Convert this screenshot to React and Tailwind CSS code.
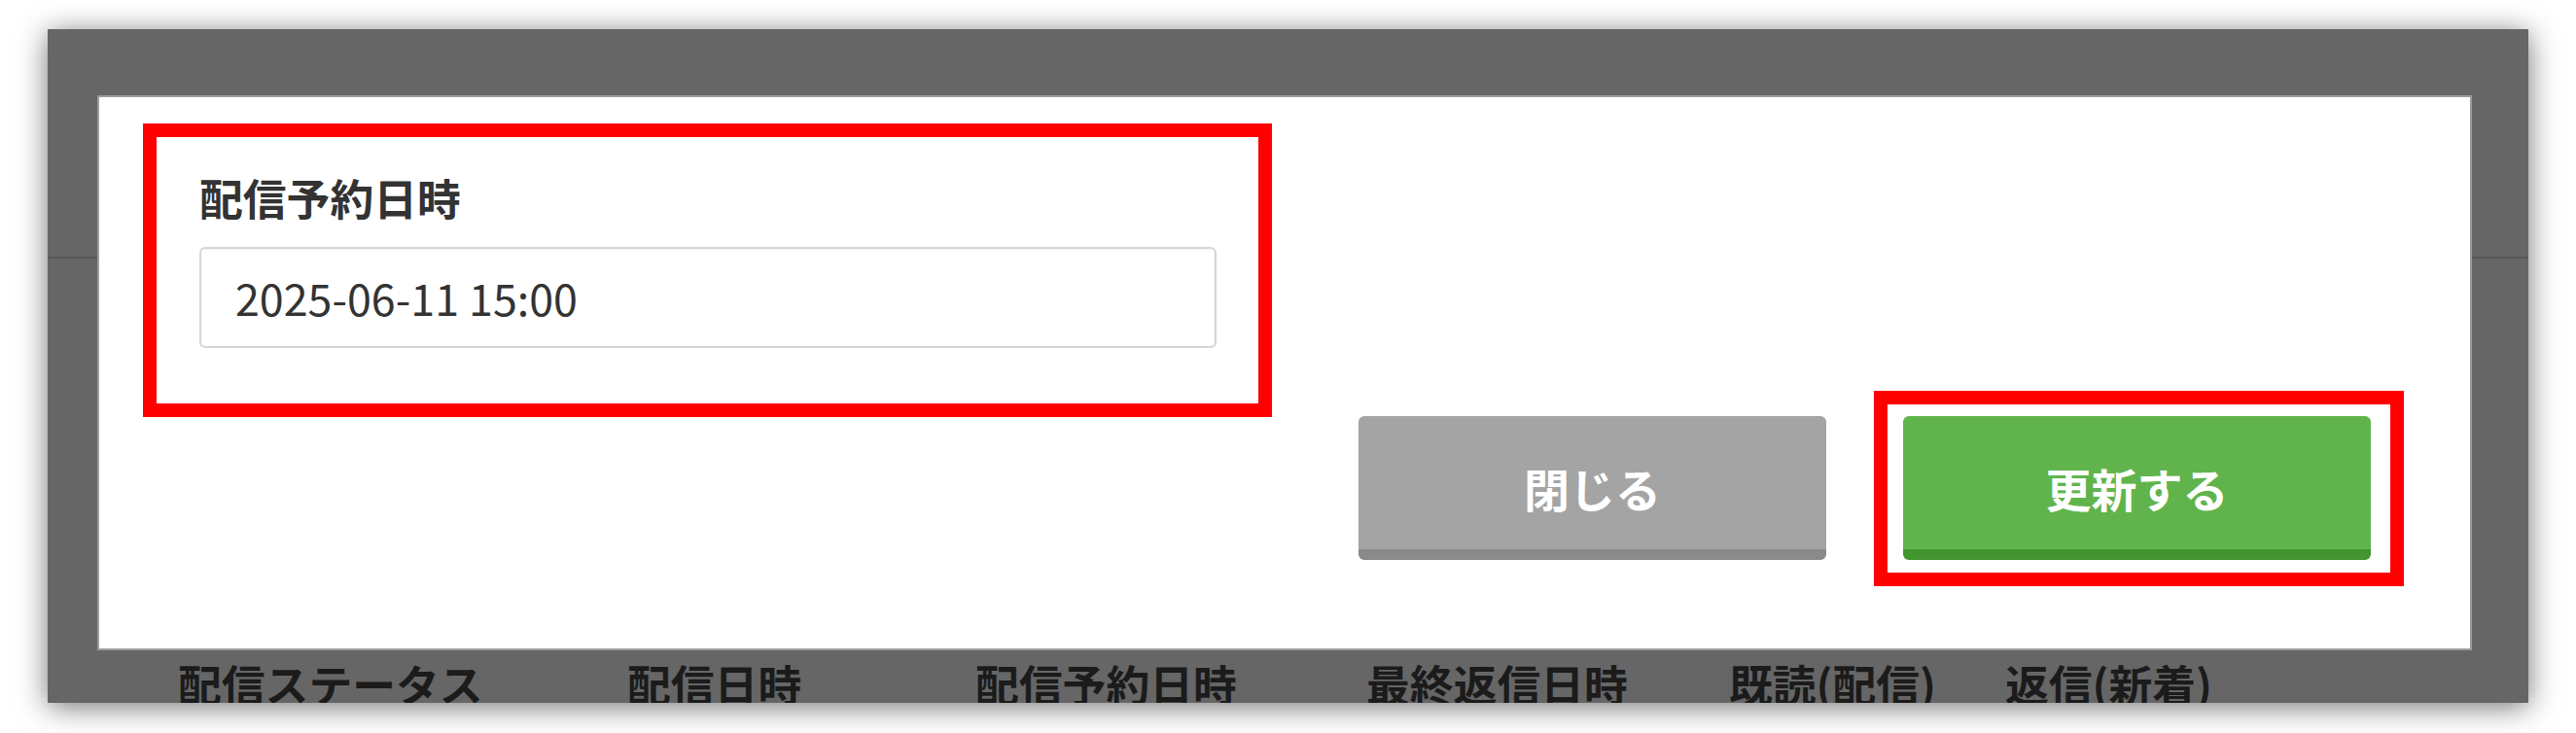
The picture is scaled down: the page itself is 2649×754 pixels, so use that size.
import React from "react";

const font = { fontFamily: '"Noto Sans CJK JP", "Noto Sans", sans-serif' };

export default function App() {
  return (
    <div
      className="w-[2649px] h-[754px] bg-white pt-[30px] pl-[49px] overflow-hidden"
      style={font}
    >
      <div className="relative w-[2551px] h-[693px] overflow-hidden bg-[#666666] shadow-[0_4px_28px_rgba(0,0,0,0.55)]">
        {/* background page (dimmed) */}
        <div className="h-[236px] border-b-2 border-[#585858]" />
        <div className="mt-[414px] flex pl-[134px] text-[44.8px] leading-[45px] font-bold text-[#1b1b1b] whitespace-nowrap">
          <div className="w-[462px]">配信ステータス</div>
          <div className="w-[358px]">配信日時</div>
          <div className="w-[402px]">配信予約日時</div>
          <div className="w-[373px]">最終返信日時</div>
          <div className="w-[284px]">既読(配信)</div>
          <div>返信(新着)</div>
        </div>

        {/* modal */}
        <div className="absolute left-[51px] top-[68px] w-[2442px] h-[571px] bg-white border-2 border-[#9c9c9c] flex flex-col pt-[27px] pl-[45px]">
          <div className="w-[1161px] h-[302px] border-[14px] border-[#ff0000] pt-[39px] pl-[44px] pr-[43px] flex flex-col">
            <div className="text-[44.8px] leading-[45px] font-bold text-[#333333]">
              配信予約日時
            </div>
            <div className="mt-[29px] h-[104px] border-2 border-[#d6d6d6] rounded-[6px] flex items-center pl-[35px] text-[44.8px] text-[#333333] shadow-[inset_0_1px_2px_rgba(0,0,0,0.06)]">
              2025-06-11 15:00
            </div>
          </div>

          <div className="mt-[-27px] flex justify-end items-start pr-[68px]">
            <button className="mt-[26px] w-[481px] h-[148px] rounded-[6px] bg-[#a4a4a4] border-b-[11px] border-[#8a8a8a] flex items-center justify-center pt-[10px] text-white font-bold text-[47px] leading-none">
              閉じる
            </button>
            <div className="ml-[49px] w-[545px] h-[201px] border-[14px] border-[#ff0000] pt-[12px] pl-[16px]">
              <button className="w-[481px] h-[148px] rounded-[6px] bg-[#61b44c] border-b-[11px] border-[#43952f] flex items-center justify-center pt-[10px] text-white font-bold text-[47px] leading-none">
                更新する
              </button>
            </div>
          </div>
        </div>
      </div>
    </div>
  );
}
